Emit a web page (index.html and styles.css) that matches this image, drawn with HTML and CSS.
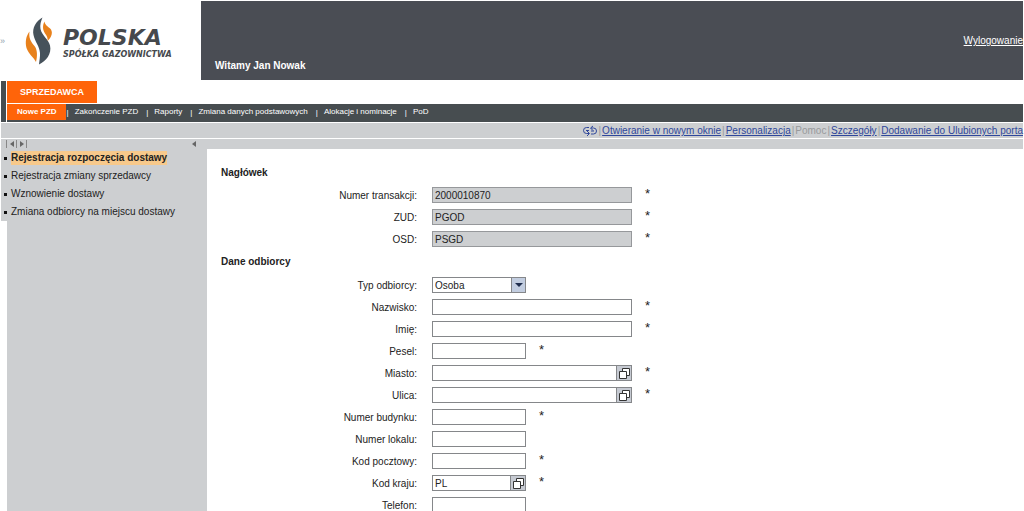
FILE: index.html
```html
<!DOCTYPE html>
<html lang="pl">
<head>
    <meta charset="UTF-8">
    <meta name="viewport" content="width=device-width, initial-scale=1.0">
    <title>Rejestracja rozpoczęcia dostawy</title>
    <link rel="stylesheet" href="styles.css">
</head>
<body>
    <header class="masthead">
        <div class="brand">
            <span class="brand-skip">»</span>
            <svg class="brand-flame" viewBox="0 0 27 48" aria-hidden="true">
                <path fill="#e8811c" d="M4.500 14.500C1 19 0 25 1.500 31c2 6 7 9 9.500 14 1.500-6 1.500-12-1.500-16C6 25 3.500 21 4.500 14.500z"/>
                <path fill="#46525b" d="M17.500 .5C11 4 7 11 8.500 18c1.500 7 6 11 6.500 18 .2 4-.5 7-1 11.500C21 44 27 37 25 28.500 23.500 22 17 19 15.500 12c-.8-4 .5-8 2-11.500z"/>
                <path fill="#e8811c" d="M19.500 4.500c-2.500 5-1.500 9 .5 12 2 2.500 3 4.500 2.500 7.500 4-3.500 5.500-8 3.500-11.500C24 10 20 8.500 19.500 4.500z"/>
            </svg>
            <div class="brand-text">
                <span class="brand-name">POLSKA</span>
                <span class="brand-sub">SPÓŁKA GAZOWNICTWA</span>
            </div>
        </div>
        <div class="welcome">
            <a class="logout" href="#">Wylogowanie</a>
            <span class="greeting">Witamy Jan Nowak</span>
        </div>
    </header>

    <nav class="menu">
        <a class="tab" href="#">SPRZEDAWCA</a>
        <ul class="submenu">
            <li class="active"><a href="#">Nowe PZD</a></li>
            <li><a href="#">Zakończenie PZD</a></li>
            <li><a href="#">Raporty</a></li>
            <li><a href="#">Zmiana danych podstawowych</a></li>
            <li><a href="#">Alokacje i nominacje</a></li>
            <li><a href="#">PoD</a></li>
        </ul>
    </nav>

    <div class="page-links">
        <svg class="refresh" viewBox="0 0 16 12" fill="none" stroke="#2f479b" aria-hidden="true">
            <path d="M7 2.500H4.500a3 3 0 0 0 0 6H7M5 6l2.500 2.500L5 11M9 9h2.500a3 3 0 0 0 0-6H9M11 1L8.500 3 11 5.500M4 5.500h3M9 6h3"/>
        </svg>
        <span>|</span>
        <a href="#">Otwieranie w nowym oknie</a>
        <span>|</span>
        <a href="#">Personalizacja</a>
        <span>|</span>
        <span>Pomoc</span>
        <span>|</span>
        <a href="#">Szczegóły</a>
        <span>|</span>
        <a href="#">Dodawanie do Ulubionych porta</a>
    </div>

    <div class="layout">
        <aside class="sidebar">
            <div class="tray">
                <div class="tray-buttons">
                    <button class="tray-btn left" aria-label="Wstecz"></button>
                    <button class="tray-btn right" aria-label="Dalej"></button>
                </div>
                <button class="tray-btn left hide" aria-label="Ukryj"></button>
            </div>
            <ul class="side-nav">
                <li class="selected"><a href="#">Rejestracja rozpoczęcia dostawy</a></li>
                <li><a href="#">Rejestracja zmiany sprzedawcy</a></li>
                <li><a href="#">Wznowienie dostawy</a></li>
                <li><a href="#">Zmiana odbiorcy na miejscu dostawy</a></li>
            </ul>
            <div class="side-fill"></div>
        </aside>

        <main class="content">
            <form>
                <h2>Nagłówek</h2>
                <div class="row">
                    <label for="transakcja">Numer transakcji:</label>
                    <input class="long" type="text" id="transakcja" value="2000010870" readonly>
                    <span class="req">*</span>
                </div>
                <div class="row">
                    <label for="zud">ZUD:</label>
                    <input class="long" type="text" id="zud" value="PGOD" readonly>
                    <span class="req">*</span>
                </div>
                <div class="row">
                    <label for="osd">OSD:</label>
                    <input class="long" type="text" id="osd" value="PSGD" readonly>
                    <span class="req">*</span>
                </div>

                <h2>Dane odbiorcy</h2>
                <div class="row">
                    <label for="typ">Typ odbiorcy:</label>
                    <div class="select-box">
                        <select id="typ">
                            <option>Osoba</option>
                        </select>
                        <span class="arrow"></span>
                    </div>
                </div>
                <div class="row">
                    <label for="nazwisko">Nazwisko:</label>
                    <input class="long" type="text" id="nazwisko">
                    <span class="req">*</span>
                </div>
                <div class="row">
                    <label for="imie">Imię:</label>
                    <input class="long" type="text" id="imie">
                    <span class="req">*</span>
                </div>
                <div class="row">
                    <label for="pesel">Pesel:</label>
                    <input class="short" type="text" id="pesel">
                    <span class="req">*</span>
                </div>
                <div class="row">
                    <label for="miasto">Miasto:</label>
                    <div class="lookup long">
                        <input type="text" id="miasto">
                        <button type="button" aria-label="Wybierz miasto">
                            <svg viewBox="0 0 13 13" aria-hidden="true"><path d="M4.500 4.500v-3h7v7h-3M1.500 4.500h7v7h-7z"/></svg>
                        </button>
                    </div>
                    <span class="req">*</span>
                </div>
                <div class="row">
                    <label for="ulica">Ulica:</label>
                    <div class="lookup long">
                        <input type="text" id="ulica">
                        <button type="button" aria-label="Wybierz ulicę">
                            <svg viewBox="0 0 13 13" aria-hidden="true"><path d="M4.500 4.500v-3h7v7h-3M1.500 4.500h7v7h-7z"/></svg>
                        </button>
                    </div>
                    <span class="req">*</span>
                </div>
                <div class="row">
                    <label for="budynek">Numer budynku:</label>
                    <input class="short" type="text" id="budynek">
                    <span class="req">*</span>
                </div>
                <div class="row">
                    <label for="lokal">Numer lokalu:</label>
                    <input class="short" type="text" id="lokal">
                </div>
                <div class="row">
                    <label for="kod">Kod pocztowy:</label>
                    <input class="short" type="text" id="kod">
                    <span class="req">*</span>
                </div>
                <div class="row">
                    <label for="kraj">Kod kraju:</label>
                    <div class="lookup short">
                        <input type="text" id="kraj" value="PL">
                        <button type="button" aria-label="Wybierz kraj">
                            <svg viewBox="0 0 13 13" aria-hidden="true"><path d="M4.500 4.500v-3h7v7h-3M1.500 4.500h7v7h-7z"/></svg>
                        </button>
                    </div>
                    <span class="req">*</span>
                </div>
                <div class="row">
                    <label for="telefon">Telefon:</label>
                    <input class="short" type="text" id="telefon">
                </div>
            </form>
        </main>
    </div>
</body>
</html>
```
FILE: styles.css
```css
/* General */
* {
    box-sizing: border-box;
    margin: 0;
    padding: 0;
}

body {
    display: flex;
    flex-direction: column;
    height: 100vh;
    overflow: hidden;
    background: #fff;
    color: #222;
    font-family: "Liberation Sans", Arial, sans-serif;
    font-size: 10px;
}

ul {
    list-style: none;
}

a {
    color: inherit;
    text-decoration: none;
}

button {
    border: none;
    cursor: pointer;
}

/* Masthead */
.masthead {
    display: flex;
    flex: none;
    height: 81px;
    padding: 1px 1px 1px 0;
}

.brand {
    display: flex;
    align-items: center;
    width: 201px;
}

.brand-skip {
    width: 25px;
    color: #8fa3ae;
    font-size: 9px;
}

.brand-flame {
    width: 27px;
    height: 48px;
}

.brand-text {
    display: flex;
    flex-direction: column;
    margin-left: 11px;
    padding-top: 6px;
    color: #46494d;
    font-family: "DejaVu Sans", Verdana, sans-serif;
    font-style: italic;
    font-weight: bold;
}

.brand-name {
    font-size: 22px;
    line-height: 22px;
}

.brand-sub {
    font-size: 8px;
    line-height: 12px;
}

.welcome {
    display: flex;
    flex: 1;
    flex-direction: column;
    justify-content: space-between;
    padding: 34px 0 9px 14px;
    background: #4a4d54;
    color: #fff;
}

.logout {
    align-self: flex-end;
    text-decoration: underline;
}

.greeting {
    font-weight: bold;
}

/* Menu */
.menu {
    flex: none;
    margin: 0 1px;
    padding-left: 1px;
    border-left: 5px solid #474d50;
}

.tab {
    display: inline-block;
    padding: 0 13px;
    background: #ff6409;
    color: #fff;
    font-size: 9px;
    font-weight: bold;
    line-height: 22px;
    vertical-align: top;
}

.submenu {
    display: flex;
    height: 18px;
    margin-top: 1px;
    background: #474d50;
    color: #fff;
    font-size: 8px;
    line-height: 16px;
}

.submenu li {
    display: flex;
}

.submenu li + li::before {
    content: "|";
    padding: 1px 6px 0 0;
}

.submenu li + li {
    padding-right: 8px;
}

.submenu .active {
    height: 16px;
    margin-right: 1px;
    padding: 0 9px 0 10px;
    background: #ff6409;
    font-weight: bold;
}

/* Page links */
.page-links {
    display: flex;
    flex: none;
    align-items: center;
    justify-content: flex-end;
    gap: 1px;
    height: 15px;
    margin: 1px;
    background: #cdcfd1;
    color: #989a9c;
    white-space: nowrap;
}

.page-links a {
    color: #2f479b;
    text-decoration: underline;
}

.refresh {
    width: 16px;
    height: 12px;
}

/* Sidebar */
.layout {
    display: flex;
    flex: 1;
    min-height: 0;
    margin: 0 1px;
    border-top: 10px solid #cdcfd1;
}

.sidebar {
    display: flex;
    flex: none;
    flex-direction: column;
    width: 206px;
    margin-top: -10px;
}

.tray {
    display: flex;
    align-items: center;
    justify-content: space-between;
    height: 9px;
    padding: 0 8px 0 5px;
}

.tray-buttons {
    display: flex;
    border-left: 1px solid #888;
}

.tray-btn {
    display: flex;
    align-items: center;
    justify-content: center;
    width: 10px;
    height: 8px;
    border-right: 1px solid #888;
    background: none;
}

.tray-btn::before {
    content: "";
    border: 3px solid transparent;
}

.tray-btn.left::before {
    border-left: none;
    border-right: 4px solid #666;
}

.tray-btn.right::before {
    border-right: none;
    border-left: 4px solid #666;
}

.tray-btn.hide {
    border: none;
}

.side-nav {
    padding: 1px 0 0 3px;
    background: #cdcfd1;
}

.side-nav li {
    display: flex;
    align-items: center;
    gap: 4px;
    height: 18px;
}

.side-nav li::before {
    content: "";
    width: 3px;
    height: 3px;
    background: #111;
}

.side-nav a {
    line-height: 14px;
}

.side-nav .selected a {
    background: #f7c98b;
    font-weight: bold;
}

.side-fill {
    flex: 1;
    margin-left: 6px;
    background: #cdcfd1;
}

/* Form */
.content {
    flex: 1;
    min-width: 0;
    padding: 14px 14px 0;
}

h2 {
    height: 21px;
    font-size: 10px;
    line-height: 20px;
}

.row {
    display: flex;
    align-items: center;
    height: 22px;
}

.row + h2 {
    height: 24px;
    padding-top: 2px;
}

label {
    width: 196px;
    margin-right: 15px;
    text-align: right;
}

input,
select {
    height: 16px;
    padding: 0 2px;
    border: 1px solid #85878a;
    background: #fff;
    color: #222;
    font-family: inherit;
    font-size: 10px;
}

input[readonly] {
    background: #cdcfd1;
    border-color: #96989b;
}

.long {
    width: 200px;
}

.short {
    width: 94px;
}

.req {
    margin-left: 13px;
    padding-bottom: 2px;
    font-size: 13px;
    line-height: 18px;
}

.select-box {
    display: flex;
    position: relative;
    width: 94px;
}

.select-box select {
    width: 100%;
    appearance: none;
    border-radius: 0;
}

.arrow {
    display: flex;
    align-items: center;
    justify-content: center;
    position: absolute;
    top: 1px;
    right: 1px;
    width: 14px;
    height: 14px;
    border-left: 1px solid #85878a;
    background: #c2cde0;
    pointer-events: none;
}

.arrow::before {
    content: "";
    border: 4px solid transparent;
    border-top-color: #1f2d4d;
    border-bottom: none;
}

.lookup {
    display: flex;
}

.lookup input {
    flex: 1;
    min-width: 0;
}

.lookup button {
    display: flex;
    align-items: center;
    justify-content: center;
    width: 15px;
    border: 1px solid #85878a;
    border-left: none;
    background: #c6cad2;
}

.lookup svg {
    flex: none;
    width: 13px;
    height: 13px;
    fill: #fff;
    stroke: #333;
}
```
